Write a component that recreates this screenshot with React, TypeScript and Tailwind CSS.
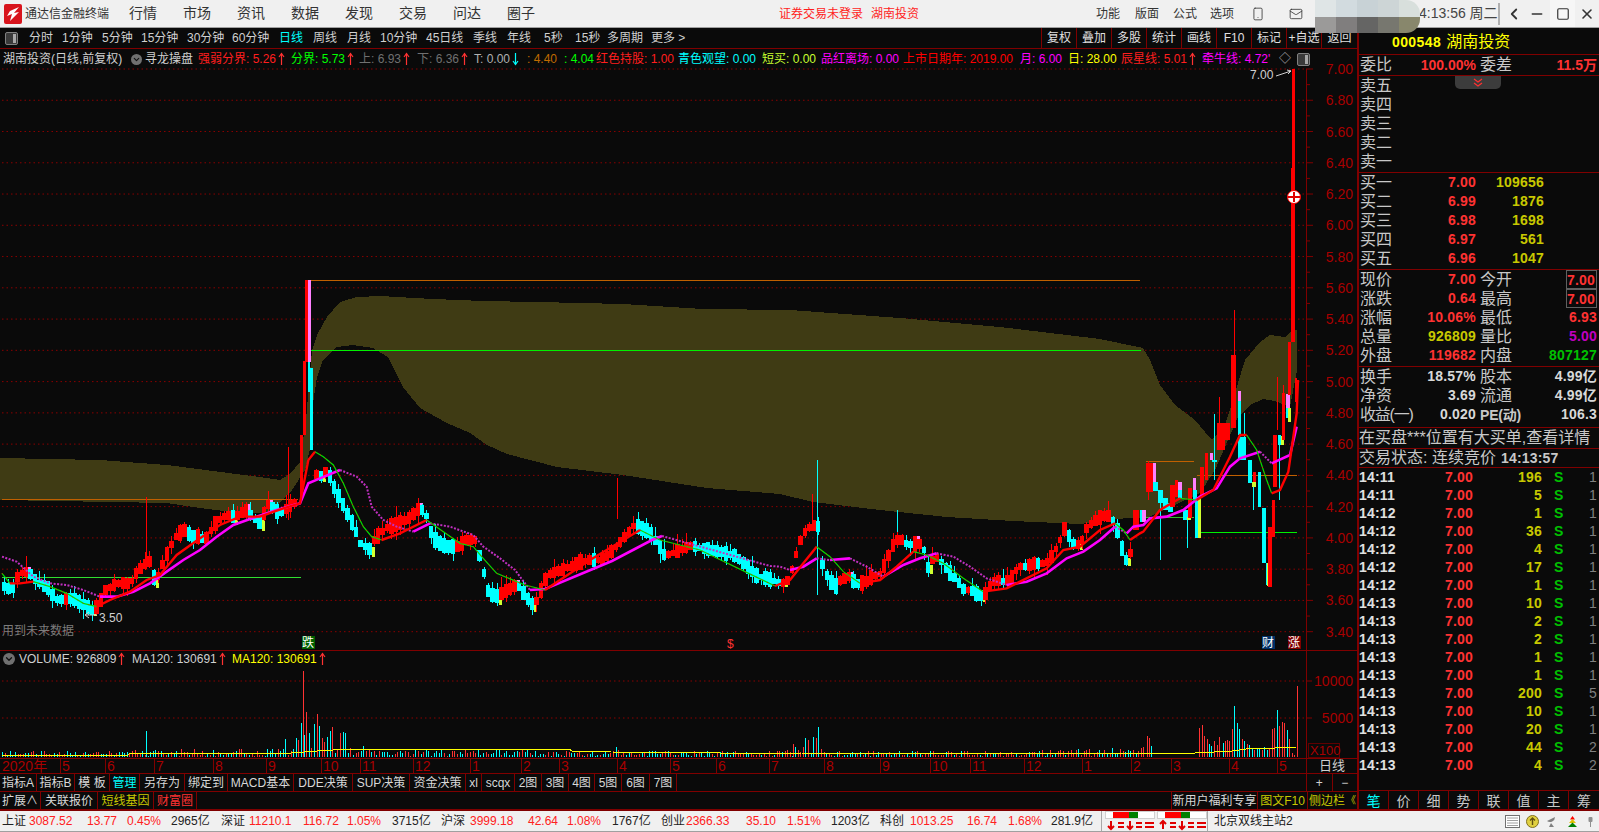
import { ChevronLeft, Minus, Square, X, Smartphone, Mail, ChevronDown } from 'lucide-react';
import type { ReactNode } from 'react';

// ---------- chart data, traced from the picture ----------
type Pt = number[];

const z8 = (list: Pt[]) => list.map(([a, b]) => [a / 3, 440 + b / 3]);
const z9 = (list: Pt[]) => list.map(([a, b]) => [1100 + a / 3, 280 + b / 3]);
const z10 = (list: Pt[]) => list.map(([a, b]) => [290 + a / 3, 270 + b / 3]);
const z11 = (list: Pt[]) => list.map(([a, b]) => [780 + a / 3, 430 + b / 3]);

const pricePath: Pt[] = [
  ...z8([[6,440],[30,450],[50,400],[80,395],[110,430],[140,445],[160,480],[210,475],[240,490],[270,510],[290,495],[310,450],[345,430],[385,430],[405,395],[440,360],[460,430],[490,350],[520,290],[545,270],[570,290],[590,290],[610,300],[640,250],[670,225],[700,230],[730,210],[770,250],[800,190],[830,220],[860,200],[890,180]]),
  ...z10([[75,610],[90,620],[105,600],[125,650],[150,700],[165,730],[190,780],[205,820],[235,840]]),
  ...z8([[1090,345],[1110,305],[1150,265],[1190,250],[1220,235],[1250,205],[1270,215],[1290,290],[1310,310],[1340,320],[1370,320],[1390,300],[1420,300],[1440,380],[1460,460],[1480,470]]),
  [515,585],[532,607],[545,575],[560,570],[581,561],[602,559],[620,540],[632,525],[648,532],[663,556],[688,546],[714,551],[734,556],[755,576],
  ...z11([[0,460],[20,450],[40,380],[60,315],[90,285],[110,290],[120,400],[140,450],[160,470],[175,450],[200,440],[220,460],[245,460],[270,440],[295,430],[310,400],[330,350],[350,325],[380,345],[410,340],[425,360],[440,420],[455,380],[470,385],[495,420],[520,445],[545,480],[565,480],[580,490],[605,500],[620,470],[640,450],[670,455],[690,440],[710,410],[730,410],[755,400],[790,400],[815,370],[830,340],[850,290],[865,330],[880,350],[900,330],[915,290],[935,275],[950,265],[975,255],[990,265],[1005,300],[1025,380],[1040,400],[1050,340],[1065,260]]),
];

const redLine: Pt[] = [
  ...z8([[6,400],[30,430],[60,430],[100,425],[150,440],[200,460],[250,490],[290,500],[330,480],[390,455],[440,420],[480,405],[530,345],[600,295],[660,255],[720,230],[780,230],[850,205],[900,190],[925,60],[945,35],[970,50],[1000,75],[1030,130],[1060,200],[1090,260],[1115,290],[1145,300],[1200,280],[1280,240],[1330,275],[1380,310],[1420,320],[1445,350],[1490,400]]),
  [525,585],[545,590],[590,560],[640,530],[660,540],[700,550],[775,586],
  ...z11([[30,450],[70,400],[110,350],[150,380],[190,425],[240,460],[300,450],[350,410],[400,365],[440,375],[490,400],[550,445],[610,485],[680,475],[720,455],[800,415],[850,360],[900,350],[960,300],[1005,280],[1030,300],[1050,330],[1080,310]]),
  ...z9([[130,755],[180,690],[240,655],[290,660],[340,630],[390,530],[420,465],[440,465],[470,510],[500,600],[515,640],[540,630],[565,575],[590,400],[594,300]]),
];

const magentaLine: Pt[] = [
  ...z8([[6,350],[50,365],[100,410],[150,430],[200,435],[250,450],[300,470],[350,470],[400,455],[450,430],[500,395],[550,360],[600,330],[650,290],[700,255],[770,230],[830,210],[900,190],[925,130],[960,115],[1020,90],[1070,110],[1100,140],[1115,200],[1150,240],[1190,260],[1240,275],[1290,250],[1350,260],[1420,285],[1450,320],[1500,355]]),
  [515,570],[530,590],[545,589],[612,561],[652,540],[662,536],[734,556],[770,566],
  ...z11([[0,410],[30,420],[70,410],[110,385],[150,390],[210,385],[260,410],[310,440],[370,405],[420,385],[470,370],[520,380],[570,410],[620,445],[680,465],[740,455],[800,430],[860,385],[910,365],[960,330],[1005,290],[1040,310],[1090,285]]),
  ...z9([[100,740],[150,715],[200,710],[250,690],[300,650],[350,625],[390,560],[420,535],[480,515],[515,550],[570,525],[590,440]]),
];

const cloud =
  '0,458 100,460 167,465 267,478 280,480 290,474 300,462 306,420 312,350 318,333 327,317 340,302 357,297 380,296 433,299 483,301 537,302 623,304 703,309 790,310 900,318 1000,327 1100,339 1143,348 1150,360 1160,385 1175,405 1195,420 1205,432 1212,440 1225,425 1233,400 1238,383 1245,360 1260,342 1270,335 1285,337 1292,330 1297,330 1297,370 1290,407 1275,401 1263,399 1250,405 1238,417 1228,440 1215,470 1200,493 1147,518 1127,518 1080,524 1013,521 947,517 880,510 813,502 780,494 707,488 623,475 557,467 507,454 487,445 470,433 447,423 420,408 403,387 388,357 373,348 353,345 337,347 323,360 317,377 313,403 312,440 305,470 292,490 270,513 240,513 200,508 167,503 0,500';

const PRICE = ['7.00','6.80','6.60','6.40','6.20','6.00','5.80','5.60','5.40','5.20','5.00','4.80','4.60','4.40','4.20','4.00','3.80','3.60','3.40'];
const priceY = (i: number) => 69 + i * 31.26;

const UP = '#ff0000';
const DOWN = '#00ffff';
const PINK = '#ff80ff';
const LIME = '#d0ff30';

let seed = 20210518;
const rnd = () => {
  seed = (seed * 1664525 + 1013904223) % 4294967296;
  return seed / 4294967296;
};

const at = (list: Pt[], x: number) => {
  for (let i = 1; i < list.length; i++) {
    if (x <= list[i][0]) {
      const [a, b] = list[i - 1];
      const [c, d] = list[i];
      return b + ((d - b) * (x - a)) / Math.max(c - a, 0.1);
    }
  }
  return list[list.length - 1][1];
};

type Box = { x: number; y: number; w: number; h: number; c: string };
const boxes: Box[] = [];
type Vol = { x: number; h: number; c: string };
const vols: Vol[] = [];

const ampPts: Pt[] = [[0,5],[140,6],[280,8],[296,45],[320,42],[345,24],[370,7],[612,6],[617,14],[622,6],[700,5],[785,6],[800,12],[812,26],[825,6],[1000,5],[1100,8],[1146,10]];

const STEP = 4.4;
for (let x = 2; x < 1130; x += STEP) {
  const inSpike = x > 296 && x < 313;
  if (inSpike) continue;
  const y = at(pricePath, x);
  const prev = at(pricePath, x - STEP);
  const next = at(pricePath, x + STEP);
  const up = y - prev < (rnd() - 0.5) * 2;
  const half = 3 + rnd() * 5;
  const c = up ? UP : DOWN;
  const top = y - half;
  const wickTop = top - rnd() * rnd() * 12;
  const wickBottom = y + half + rnd() * rnd() * 10;
  boxes.push({ x: x + 2, y: wickTop, w: 1, h: wickBottom - wickTop, c });
  boxes.push({ x, y: top, w: STEP, h: half * 2, c });
  const peak = y < prev - 0.3 && y <= next;
  const dip = y > prev + 0.3 && y >= next;
  if (peak && rnd() > 0.3) boxes.push({ x: x + STEP, y: top, w: 3, h: half * 1.5, c: PINK });
  if (dip && rnd() > 0.3) boxes.push({ x: x + STEP, y: y - 2, w: 3, h: half * 1.6, c: LIME });
}

for (let x = 2; x < 1146; x += 2.6) {
  const up = rnd() > 0.5;
  vols.push({ x: Math.round(x), h: 1 + rnd() * at(ampPts, x), c: up ? '#ff3232' : DOWN });
}

// the last stretch and the big bars are drawn candle by candle
const hand: [number, number, number, number, string][] = [
  [100,118,690,750,UP],[120,132,690,725,DOWN],[126,138,690,725,PINK],[138,158,550,635,UP],[158,168,550,605,PINK],[160,175,605,632,DOWN],[175,190,630,670,DOWN],[190,205,655,690,DOWN],[205,220,670,695,DOWN],[210,225,615,680,UP],[225,235,600,650,UP],[235,245,605,630,PINK],[235,247,630,655,DOWN],[250,262,690,720,DOWN],[262,274,710,720,LIME],[265,275,625,715,UP],[278,288,595,630,PINK],[278,290,630,660,DOWN],[285,296,650,775,DOWN],[295,303,650,775,LIME],[300,312,560,650,UP],[315,325,520,600,UP],[330,340,520,540,PINK],[335,352,540,545,DOWN],[352,375,430,510,UP],[375,390,430,480,UP],[393,408,225,445,UP],[413,423,333,363,PINK],[413,423,363,465,DOWN],[415,438,470,540,DOWN],[445,455,540,610,DOWN],[455,467,605,620,LIME],[460,468,575,605,UP],[473,483,575,680,DOWN],[487,497,685,850,DOWN],[498,505,850,915,DOWN],[502,512,850,918,LIME],[505,515,740,920,UP],[515,525,660,770,UP],[520,530,465,620,UP],[533,543,465,495,DOWN],[543,551,468,495,LIME],[545,555,340,480,UP],[558,570,342,385,PINK],[558,566,385,415,DOWN],[564,572,385,425,LIME],[563,573,185,345,UP],[586,592,295,365,UP],
];
for (const [a, b, c, d, col] of hand) {
  boxes.push({ x: 1100 + a / 3, y: 280 + c / 3, w: (b - a) / 3, h: (d - c) / 3, c: col });
}

const wicks: [number, number, number, string][] = [
  [146,497,560,UP],[288,447,520,UP],[617,478,519,UP],[817,460,595,DOWN],[812,494,525,UP],[897,510,545,DOWN],
  [1100+145/3,461,500,UP],[1100+180/3,500,560,DOWN],[1100+260/3,510,548,DOWN],[1100+343/3,414,480,DOWN],[1100+358/3,397,440,UP],[1100+403/3,310,380,UP],[1100+432/3,413,455,DOWN],[1100+458/3,480,510,DOWN],[1100+538/3,440,500,DOWN],[1100+532/3,377,430,UP],[1100+548/3,385,410,UP],
];

// spike of the first rally
boxes.push({ x: 300, y: 435, w: 3, h: 62, c: UP });
boxes.push({ x: 303, y: 361, w: 3, h: 74, c: UP });
boxes.push({ x: 305, y: 280, w: 3, h: 82, c: UP });
boxes.push({ x: 308, y: 280, w: 3, h: 82, c: PINK });
boxes.push({ x: 308, y: 362, w: 2, h: 30, c: DOWN });
boxes.push({ x: 310, y: 368, w: 3, h: 82, c: DOWN });
// limit-up run on the right
boxes.push({ x: 1292, y: 69, w: 3, h: 100, c: UP });
boxes.push({ x: 1291, y: 168, w: 4, h: 174, c: UP });

const handVol: [number, number][] = [[50,350],[58,355],[63,378],[207,325],[215,315],[223,350],[230,358],[238,372],[244,378],[253,365],[260,375],[268,352],[278,370],[284,365],[292,360],[298,365],[307,328],[313,258],[322,310],[328,328],[337,358],[343,365],[352,372],[358,375],[366,385],[373,392],[381,388],[388,385],[396,392],[403,382],[411,392],[418,385],[427,328],[433,325],[442,270],[448,318],[457,306],[463,310],[472,330],[478,358],[487,400],[493,405],[502,200]];
const handCyan = [63,238,244,278,313,322,328,343,358,366,381,388,403,411,442,472];
for (const [a, top] of handVol) {
  vols.push({ x: Math.round(1130 + a / 3), h: (412 - top) / 3, c: handCyan.includes(a) ? DOWN : '#ff3232' });
}
vols.push({ x: 303, h: 86, c: '#ff3232' }, { x: 146, h: 26, c: DOWN }, { x: 818, h: 30, c: DOWN }, { x: 793, h: 13, c: '#ff3232' });

const volMa = '2,755 128,755 130,753 291,753 317,751 349,749 569,749 572,751 611,752 720,753 757,754 802,753 1195,753 1214,752 1232,751 1246,749 1275,748 1296,747';

const runs = (list: Pt[]) => {
  const sorted = [...list].sort((a, b) => a[0] - b[0]);
  const out: { rising: boolean; pts: string }[] = [];
  let cur: Pt[] = [sorted[0]];
  let rising = sorted[1][1] <= sorted[0][1];
  for (let i = 1; i < sorted.length; i++) {
    const r = sorted[i][1] <= sorted[i - 1][1];
    if (r !== rising) {
      out.push({ rising, pts: cur.map((p) => p.join(',')).join(' ') });
      cur = [sorted[i - 1]];
      rising = r;
    }
    cur.push(sorted[i]);
  }
  out.push({ rising, pts: cur.map((p) => p.join(',')).join(' ') });
  return out;
};

// ---------- small bits ----------
function UpArrow({ color = '#ff3232' }: { color?: string }) {
  return (
    <svg width="7" height="14" viewBox="0 0 7 14" className="inline-block shrink-0 ml-[2px]">
      <path d="M3.5 1 L3.5 13 M1 5 L3.5 1.5 L6 5" stroke={color} strokeWidth="1.2" fill="none" />
    </svg>
  );
}

function DownArrow({ color = '#00ffff' }: { color?: string }) {
  return (
    <svg width="7" height="14" viewBox="0 0 7 14" className="inline-block shrink-0 ml-[2px]">
      <path d="M3.5 1 L3.5 13 M1 9 L3.5 12.5 L6 9" stroke={color} strokeWidth="1.2" fill="none" />
    </svg>
  );
}

function Logo() {
  return (
    <svg width="18" height="20" viewBox="0 0 18 20" className="shrink-0">
      <rect width="18" height="20" rx="2" fill="#d8141c" />
      <path d="M15 3 L6 7 L3 12 L8 10 L6 17 L15 8 L10 9 Z" fill="#ffffff" />
    </svg>
  );
}

function SideToggle() {
  return (
    <svg width="13" height="13" viewBox="0 0 13 13">
      <rect x="0.5" y="0.5" width="12" height="12" rx="1.5" fill="#3a3a3a" stroke="#808080" />
      <rect x="8" y="2" width="3" height="9" fill="#a8a8a8" />
    </svg>
  );
}

function Pulse({ flip }: { flip: boolean }) {
  return (
    <svg width="50" height="20" viewBox="0 0 50 20" className="shrink-0">
      <rect x="0.5" y="0.5" width="49" height="7" fill="#ffffff" stroke="#d0d0d0" />
      <rect x="8" y="1" width="16" height="6" fill="#ff0000" />
      <rect x="24" y="1" width="9" height="6" fill="#008000" />
      <path d={flip ? 'M6 10 L6 18 M3 13 L6 10 L9 13' : 'M6 18 L6 10 M3 15 L6 18 L9 15'} stroke="#e00000" strokeWidth="2" fill="none" />
      <path d="M13 12 H19 M13 16 H19 M31 12 H37 M31 16 H37 M40 12 H49 M40 16 H49" stroke="#e00000" strokeWidth="2" />
      <path d="M25 10 L25 18 M22 15 L25 18 L28 15" stroke="#e00000" strokeWidth="2" fill="none" />
    </svg>
  );
}

// ---------- panels ----------
const menus = ['行情', '市场', '资讯', '数据', '发现', '交易', '问达', '圈子'];

function TitleBar() {
  return (
    <div className="h-[28px] shrink-0 flex items-center bg-[#f0f0f0] border-b border-[#a0a0a0] text-[#333] relative">
      <div className="ml-[4px] flex items-center w-[125px]">
        <Logo />
        <span className="ml-[3px] text-[12px]">通达信金融终端</span>
      </div>
      {menus.map((m) => (
        <span key={m} className="w-[54px] text-[14px]">{m}</span>
      ))}
      <span className="ml-[218px] text-[12px] text-[#ff1e1e] w-[92px]">证券交易未登录</span>
      <span className="text-[12px] text-[#ff1e1e] w-[225px]">湖南投资</span>
      <span className="text-[12px] w-[39px]">功能</span>
      <span className="text-[12px] w-[38px]">版面</span>
      <span className="text-[12px] w-[37px]">公式</span>
      <span className="text-[12px] w-[41px]">选项</span>
      <Smartphone size={14} strokeWidth={1.4} className="w-[14px]" />
      <Mail size={14} strokeWidth={1.4} className="ml-[24px]" />
      <span className="ml-[116px] text-[14px] w-[79px] text-[#444] whitespace-nowrap">4:13:56 周二</span>
      <div className="h-[22px] w-[2px] bg-[#b0b0b0]" />
      <ChevronLeft size={18} strokeWidth={2.4} className="ml-[5px]" />
      <Minus size={16} strokeWidth={2.4} className="ml-[6px]" />
      <div className="ml-[5px] w-[25px] h-full flex items-center justify-center bg-[#f6f6f6]">
        <Square size={14} strokeWidth={2} />
      </div>
      <X size={16} strokeWidth={2.4} className="ml-[4px]" />
      {/* mosaic that hides the account name */}
      <div className="absolute left-[1315px] top-0 w-[105px] h-[33px] rounded-r-[14px] overflow-hidden z-10 grid grid-cols-5 grid-rows-2">
        <div className="bg-[#dfe5e6]" />
        <div className="bg-[#d2dbdf]" />
        <div className="bg-[#c8d2d6]" />
        <div className="bg-[#cdd5d6]" />
        <div className="bg-[#d8dfdc]" />
        <div className="bg-[#9b9a99]" />
        <div className="bg-[#807e7e]" />
        <div className="bg-[#656564]" />
        <div className="bg-[#77776f]" />
        <div className="bg-[#88876c]" />
      </div>
    </div>
  );
}

const periods: [string, string, string][] = [
  ['分时', 'w-[33px]', 'text-[#d0d0d0]'], ['1分钟', 'w-[40px]', 'text-[#d0d0d0]'], ['5分钟', 'w-[39px]', 'text-[#d0d0d0]'],
  ['15分钟', 'w-[46px]', 'text-[#d0d0d0]'], ['30分钟', 'w-[45px]', 'text-[#d0d0d0]'], ['60分钟', 'w-[47px]', 'text-[#d0d0d0]'],
  ['日线', 'w-[34px]', 'text-[#00ffff]'], ['周线', 'w-[34px]', 'text-[#d0d0d0]'], ['月线', 'w-[33px]', 'text-[#d0d0d0]'],
  ['10分钟', 'w-[46px]', 'text-[#d0d0d0]'], ['45日线', 'w-[47px]', 'text-[#d0d0d0]'], ['季线', 'w-[34px]', 'text-[#d0d0d0]'],
  ['年线', 'w-[37px]', 'text-[#d0d0d0]'], ['5秒', 'w-[31px]', 'text-[#d0d0d0]'], ['15秒', 'w-[32px]', 'text-[#d0d0d0]'],
  ['多周期', 'w-[44px]', 'text-[#d0d0d0]'], ['更多 >', 'w-[34px]', 'text-[#d0d0d0]'],
];

const tools = ['复权', '叠加', '多股', '统计', '画线', 'F10', '标记', '+自选', '返回'];

function Toolbar() {
  return (
    <div className="h-[20px] shrink-0 flex items-center text-[12px] whitespace-nowrap">
      <div className="w-[29px] pl-[5px] flex items-center"><SideToggle /></div>
      {periods.map(([t, w, c]) => (
        <span key={t} className={`${w} ${c}`}>{t}</span>
      ))}
      <div className="ml-auto flex h-full">
        {tools.map((t) => (
          <span key={t} className="w-[35px] last:w-[36px] flex items-center justify-center border-l border-[#800000] text-[#e0e0e0]">{t}</span>
        ))}
      </div>
    </div>
  );
}

function InfoRow() {
  return (
    <div className="h-[21px] shrink-0 flex items-center border-t border-[#800000] text-[12px] whitespace-nowrap pl-[3px]">
      <span className="w-[128px] text-[#d0d0d0]">湖南投资(日线,前复权)</span>
      <span className="w-[14px] h-[12px] flex items-center"><span className="w-[11px] h-[11px] rounded-full bg-[#707070] flex items-center justify-center"><ChevronDown size={9} color="#111" strokeWidth={3} /></span></span>
      <span className="w-[53px] text-[#d0d0d0]">寻龙操盘</span>
      <span className="w-[93px] flex items-center text-[#ff1e1e]">强弱分界: 5.26<UpArrow /></span>
      <span className="w-[68px] flex items-center text-[#00ff00]">分界: 5.73<UpArrow /></span>
      <span className="w-[58px] flex items-center text-[#707070]">上: 6.93<UpArrow /></span>
      <span className="w-[57px] flex items-center text-[#707070]">下: 6.36<UpArrow /></span>
      <span className="w-[53px] flex items-center text-[#b0b0b0]">T: 0.00<DownArrow /></span>
      <span className="w-[37px] text-[#c06a00]">: 4.40</span>
      <span className="w-[32px] text-[#00ff00]">: 4.04</span>
      <span className="w-[82px] text-[#ff1e1e]">红色持股: 1.00</span>
      <span className="w-[84px] text-[#00ffff]">青色观望: 0.00</span>
      <span className="w-[59px] text-[#c8ff30]">短买: 0.00</span>
      <span className="w-[82px] text-[#ff00ff]">品红离场: 0.00</span>
      <span className="w-[117px] text-[#ff0000]">上市日期年: 2019.00</span>
      <span className="w-[48px] text-[#ff00ff]">月: 6.00</span>
      <span className="w-[53px] text-[#ffff00]">日: 28.00</span>
      <span className="w-[81px] flex items-center text-[#ff1e1e]">辰星线: 5.01<UpArrow /></span>
      <span className="w-[77px] text-[#ff00ff]">牵牛线: 4.72&#39;</span>
      <span className="w-[18px] text-[#b0b0b0]">◇</span>
      <SideToggle />
    </div>
  );
}

function MainChart() {
  return (
    <svg width="1357" height="581" viewBox="0 69 1357 581" className="block shrink-0 overflow-visible">
      {PRICE.map((_, i) => (
        <line key={i} x1="2" x2="1306" y1={priceY(i)} y2={priceY(i)} stroke="#8a0000" strokeDasharray="1.5 3" />
      ))}
      <polygon points={cloud} fill="#3f3b14" shapeRendering="crispEdges" />
      <g shapeRendering="crispEdges">
        <line x1="308" x2="1140" y1="280.5" y2="280.5" stroke="#c06000" />
        <line x1="311" x2="1141" y1="350.5" y2="350.5" stroke="#00f000" />
        <line x1="2" x2="298" y1="499.5" y2="499.5" stroke="#c06000" />
        <line x1="2" x2="301" y1="577.5" y2="577.5" stroke="#30e030" />
        <line x1="1146" x2="1194" y1="461.5" y2="461.5" stroke="#c06000" />
        <line x1="1146" x2="1194" y1="517.5" y2="517.5" stroke="#30c030" />
        <line x1="1197" x2="1297" y1="475.5" y2="475.5" stroke="#c06000" />
        <line x1="1201" x2="1297" y1="532.5" y2="532.5" stroke="#00f000" />
        {wicks.map(([x, a, b, c], i) => (
          <rect key={i} x={x} y={a} width="1" height={b - a} fill={c} />
        ))}
        {boxes.map((b, i) => (
          <rect key={i} x={b.x} y={b.y} width={b.w} height={b.h} fill={b.c} />
        ))}
      </g>
      {runs(magentaLine).map((r, i) =>
        r.rising ? (
          <polyline key={i} points={r.pts} fill="none" stroke="#ff00ff" strokeWidth="2.6" />
        ) : (
          <polyline key={i} points={r.pts} fill="none" stroke="#c030c0" strokeWidth="2" strokeDasharray="2 1.5" />
        ),
      )}
      {runs(redLine).map((r, i) =>
        r.rising ? (
          <polyline key={i} points={r.pts} fill="none" stroke="#ff0000" strokeWidth="2.4" />
        ) : (
          <g key={i}>
            <polyline points={r.pts} fill="none" stroke="#00e000" strokeWidth="1.2" />
            <polyline points={r.pts} fill="none" stroke="#e02000" strokeWidth="1" strokeDasharray="1 5" />
          </g>
        ),
      )}
      <circle cx="1294" cy="197" r="6.5" fill="#ffffff" stroke="#ff0000" strokeWidth="1" />
      <line x1="1288" x2="1300" y1="197" y2="197" stroke="#e00000" strokeWidth="2" />
      <line x1="1294" x2="1294" y1="192" y2="202" stroke="#e00000" strokeWidth="2" />

      <text x="1250" y="79" fontSize="12" fill="#d0d0d0">7.00</text>
      <path d="M1276 76 L1291 71 M1287 70 L1291 71 L1288 74" stroke="#d0d0d0" fill="none" />
      <text x="99" y="622" fontSize="12" fill="#d0d0d0">3.50</text>
      <path d="M97 615 L86 615 M89 612 L85 615 L89 618" stroke="#d0d0d0" fill="none" />
      <text x="2" y="635" fontSize="12" fill="#7c7c7c">用到未来数据</text>

      <rect x="302" y="636" width="13" height="13" fill="#006000" />
      <text x="302" y="647" fontSize="12" fill="#ffffff">跌</text>
      <text x="727" y="648" fontSize="12" fill="#ff3232">$</text>
      <rect x="1262" y="636" width="13" height="13" fill="#003068" />
      <text x="1262" y="647" fontSize="12" fill="#ffffff">财</text>
      <rect x="1288" y="636" width="13" height="13" fill="#800000" />
      <text x="1288" y="647" fontSize="12" fill="#ffffff">涨</text>

      <line x1="1306.5" x2="1306.5" y1="69" y2="650" stroke="#800000" />
      {Array.from({ length: 37 }, (_, i) => (
        <line key={i} x1="1306" x2={i % 2 ? 1310 : 1313} y1={69 + i * 15.63} y2={69 + i * 15.63} stroke="#800000" />
      ))}
      {PRICE.map((p, i) => (
        <text key={p} x="1353" y={priceY(i) + 5} textAnchor="end" fontSize="14" fill="#a80000">{p}</text>
      ))}
    </svg>
  );
}

function VolumeChart() {
  return (
    <div className="relative h-[108px] shrink-0 border-t border-[#800000]">
      <svg width="1357" height="107" viewBox="0 651 1357 107" className="block">
        {[681, 718].map((y) => (
          <line key={y} x1="2" x2="1306" y1={y} y2={y} stroke="#8a0000" strokeDasharray="1.5 3" />
        ))}
        <g shapeRendering="crispEdges">
          {vols.map((v, i) => (
            <rect key={i} x={v.x} y={757 - v.h} width="1" height={v.h} fill={v.c} />
          ))}
        </g>
        <polyline points={volMa} fill="none" stroke="#ffff00" strokeWidth="1" shapeRendering="crispEdges" />
        <line x1="1306.5" x2="1306.5" y1="651" y2="758" stroke="#800000" />
        <line x1="1306" x2="1312" y1="681" y2="681" stroke="#800000" />
        <line x1="1306" x2="1312" y1="718" y2="718" stroke="#800000" />
        <rect x="1308.5" y="743.5" width="31" height="14" fill="none" stroke="#600000" />
        <text x="1310" y="755" fontSize="13" fill="#a80000">X100</text>
        <text x="1353" y="686" textAnchor="end" fontSize="14" fill="#a80000">10000</text>
        <text x="1353" y="723" textAnchor="end" fontSize="14" fill="#a80000">5000</text>
      </svg>
      <div className="absolute left-[3px] top-[-1px] flex items-center text-[12px] whitespace-nowrap">
        <span className="w-[16px] h-[14px] flex items-center"><span className="w-[12px] h-[12px] rounded-full bg-[#707070] flex items-center justify-center"><ChevronDown size={10} color="#111" strokeWidth={3} /></span></span>
        <span className="w-[113px] flex items-center text-[#d0d0d0]">VOLUME: 926809<UpArrow /></span>
        <span className="w-[100px] flex items-center text-[#d0d0d0]">MA120: 130691<UpArrow /></span>
        <span className="flex items-center text-[#ffff00]">MA120: 130691<UpArrow /></span>
      </div>
    </div>
  );
}

const ticks: [string, string][] = [
  ['2020年', 'w-[58px]'], ['5', 'w-[45px]'], ['6', 'w-[49px]'], ['7', 'w-[59px]'], ['8', 'w-[53px]'], ['9', 'w-[55px]'],
  ['10', 'w-[39px]'], ['11', 'w-[53px]'], ['12', 'w-[57px]'], ['1', 'w-[51px]'], ['2', 'w-[38px]'], ['3', 'w-[58px]'],
  ['4', 'w-[53px]'], ['5', 'w-[46px]'], ['6', 'w-[53px]'], ['7', 'w-[55px]'], ['8', 'w-[56px]'], ['9', 'w-[50px]'],
  ['10', 'w-[40px]'], ['11', 'w-[54px]'], ['12', 'w-[58px]'], ['1', 'w-[49px]'], ['2', 'w-[40px]'], ['3', 'w-[58px]'],
  ['4', 'w-[48px]'], ['5', 'w-[29px]'],
];

function DateAxis() {
  return (
    <div className="h-[15px] shrink-0 flex border-t border-[#800000] text-[14px] leading-[14px] text-[#a80000]">
      <div className="w-[1306px] flex pl-[2px]">
        {ticks.map(([t, w], i) => (
          <span key={i} className={`${w} border-l border-[#800000] pl-[1px] first:border-l-0 first:pl-0 whitespace-nowrap`}>{t}</span>
        ))}
      </div>
      <span className="flex-1 border-l border-[#800000] text-center text-[#d0d0d0] text-[13px]">日线</span>
    </div>
  );
}

const buttons: [string, string, string][] = [
  ['指标A', 'w-[37px]', 'text-[#d8d8d8]'], ['指标B', 'w-[38px]', 'text-[#d8d8d8]'], ['模 板', 'w-[35px]', 'text-[#d8d8d8]'],
  ['管理', 'w-[30px]', 'text-[#00ffff]'], ['另存为', 'w-[45px]', 'text-[#d8d8d8]'], ['绑定到', 'w-[43px]', 'text-[#d8d8d8]'],
  ['MACD基本', 'w-[66px]', 'text-[#d8d8d8]'], ['DDE决策', 'w-[59px]', 'text-[#d8d8d8]'], ['SUP决策', 'w-[57px]', 'text-[#d8d8d8]'],
  ['资金决策', 'w-[56px]', 'text-[#d8d8d8]'], ['xl', 'w-[16px]', 'text-[#d8d8d8]'], ['scqx', 'w-[33px]', 'text-[#d8d8d8]'],
  ['2图', 'w-[27px]', 'text-[#d8d8d8]'], ['3图', 'w-[27px]', 'text-[#d8d8d8]'], ['4图', 'w-[26px]', 'text-[#d8d8d8]'],
  ['5图', 'w-[27px]', 'text-[#d8d8d8]'], ['6图', 'w-[28px]', 'text-[#d8d8d8]'], ['7图', 'w-[27px]', 'text-[#d8d8d8]'],
];

const extras: [string, string, string][] = [
  ['扩展∧', 'w-[41px]', 'text-[#d8d8d8]'], ['关联报价', 'w-[57px]', 'text-[#d8d8d8]'],
  ['短线基因', 'w-[56px]', 'text-[#c8c800]'], ['财富圈', 'w-[43px]', 'text-[#ff3232]'],
];

function ButtonRows() {
  return (
    <>
      <div className="h-[18px] shrink-0 flex border-t border-[#800000] text-[12px] whitespace-nowrap">
        {buttons.map(([t, w, c]) => (
          <span key={t} className={`${w} ${c} flex items-center justify-center border-r border-[#800000]`}>{t}</span>
        ))}
        <div className="ml-auto w-[51px] flex border-l border-[#800000] text-[#d0d0d0]">
          <span className="flex-1 text-center border-r border-[#800000]">+</span>
          <span className="flex-1 text-center">−</span>
        </div>
      </div>
      <div className="h-[18px] shrink-0 flex border-t border-[#800000] text-[12px] whitespace-nowrap">
        {extras.map(([t, w, c]) => (
          <span key={t} className={`${w} ${c} flex items-center justify-center border-r border-[#800000]`}>{t}</span>
        ))}
        <div className="ml-auto flex">
          <span className="w-[86px] flex items-center justify-center border-l border-[#800000] text-[#d8d8d8]">新用户福利专享</span>
          <span className="w-[50px] flex items-center justify-center border-l border-[#800000] text-[#c8c800]">图文F10</span>
          <span className="w-[50px] flex items-center justify-start pl-[1px] border-l border-[#800000] text-[#c8c800] overflow-hidden">侧边栏<span className="ml-[1px] text-[10px]">《</span></span>
        </div>
      </div>
    </>
  );
}

// ---------- quote panel ----------
const sells = ['卖五', '卖四', '卖三', '卖二', '卖一'];
const buys: [string, string, string][] = [
  ['买一', '7.00', '109656'], ['买二', '6.99', '1876'], ['买三', '6.98', '1698'], ['买四', '6.97', '561'], ['买五', '6.96', '1047'],
];

function Row2({ a, b, c, d, bc = 'text-[#ff3232]', dc = 'text-[#ff3232]', boxed = false }: { a: ReactNode; b: string; c: ReactNode; d: string; bc?: string; dc?: string; boxed?: boolean }) {
  return (
    <div className="h-[19px] flex items-center pl-[1px] text-[#c8c8c8]">
      <span className="w-[64px] text-[16px] leading-[19px] whitespace-nowrap">{a}</span>
      <span className={`w-[52px] text-right text-[14px] font-bold tracking-[0.2px] whitespace-nowrap ${bc}`}>{b}</span>
      <span className="ml-[4px] w-[46px] text-[16px] leading-[19px] whitespace-nowrap">{c}</span>
      <span className={`ml-auto mr-[2px] h-[19px] leading-[18px] text-right text-[14px] font-bold tracking-[0.2px] whitespace-nowrap ${dc} ${boxed ? 'w-[31px] border border-[#606060] pr-[1px]' : ''}`}>{d}</span>
    </div>
  );
}

const prints: [string, string, string][] = [
  ['14:11','196','1'],['14:11','5','1'],['14:12','1','1'],['14:12','36','1'],['14:12','4','1'],['14:12','17','1'],['14:12','1','1'],
  ['14:13','10','1'],['14:13','2','1'],['14:13','2','1'],['14:13','1','1'],['14:13','1','1'],['14:13','200','5'],['14:13','10','1'],
  ['14:13','20','1'],['14:13','44','2'],['14:13','4','2'],
];

const tabs = ['笔', '价', '细', '势', '联', '值', '主', '筹'];

function QuotePanel() {
  return (
    <div className="w-[242px] shrink-0 flex flex-col border-l-2 border-[#800000] text-[#c8c8c8] relative">
      <div className="h-[26px] shrink-0 flex items-center pl-[33px] pt-[2px] text-[#ffff00] whitespace-nowrap">
        <span className="text-[14px] font-bold tracking-[0.4px]">000548</span>
        <span className="ml-[5px] text-[16px]">湖南投资</span>
      </div>
      <div className="h-[21px] shrink-0 flex items-center pl-[1px] border-t border-[#800000]">
        <span className="w-[58px] text-[16px]">委比</span>
        <span className="w-[58px] text-right text-[14px] font-bold text-[#ff3232]">100.00%</span>
        <span className="ml-[4px] text-[16px]">委差</span>
        <span className="ml-auto mr-[2px] text-[14px] font-bold text-[#ff3232] whitespace-nowrap">11.5万</span>
      </div>
      <div className="h-[97px] shrink-0 pl-[1px] border-t border-[#800000] relative">
        {sells.map((s) => (
          <div key={s} className="h-[19px] text-[16px] leading-[19px]">{s}</div>
        ))}
        <div className="absolute left-[96px] top-0 w-[46px] h-[13px] rounded-b-[5px] bg-[#3c3c3c] flex items-center justify-center">
          <svg width="10" height="9" viewBox="0 0 10 9">
            <path d="M1 1 L5 4 L9 1 M1 5 L5 8 L9 5" stroke="#ff3232" strokeWidth="1.2" fill="none" />
          </svg>
        </div>
      </div>
      <div className="h-[97px] shrink-0 pl-[1px] border-t border-[#800000]">
        {buys.map(([l, p, v]) => (
          <div key={l} className="h-[19px] flex items-center">
            <span className="w-[64px] text-[16px] leading-[19px]">{l}</span>
            <span className="w-[52px] text-right text-[14px] font-bold tracking-[0.2px] text-[#ff3232]">{p}</span>
            <span className="w-[68px] text-right text-[14px] font-bold tracking-[0.2px] text-[#c8c800]">{v}</span>
          </div>
        ))}
      </div>
      <div className="h-[97px] shrink-0 border-t border-[#800000]">
        <Row2 a="现价" b="7.00" c="今开" d="7.00" boxed />
        <Row2 a="涨跌" b="0.64" c="最高" d="7.00" boxed />
        <Row2 a="涨幅" b="10.06%" c="最低" d="6.93" />
        <Row2 a="总量" b="926809" c="量比" d="5.00" bc="text-[#c8c800]" dc="text-[#c000c0]" />
        <Row2 a="外盘" b="119682" c="内盘" d="807127" dc="text-[#00c000]" />
      </div>
      <div className="h-[61px] shrink-0 border-t border-[#800000]">
        <Row2 a="换手" b="18.57%" c="股本" d="4.99亿" bc="text-[#d8d8d8]" dc="text-[#d8d8d8]" />
        <Row2 a="净资" b="3.69" c="流通" d="4.99亿" bc="text-[#d8d8d8]" dc="text-[#d8d8d8]" />
        <Row2
          a={<span className="tracking-[-1.2px]">收益(一)</span>}
          b="0.020"
          c={<span className="text-[14px] font-bold tracking-[-0.2px]">PE(动)</span>}
          d="106.3"
          bc="text-[#d8d8d8]"
          dc="text-[#d8d8d8]"
        />
      </div>
      <div className="h-[21px] shrink-0 flex items-center border-t border-[#800000] text-[16px] whitespace-nowrap">在买盘***位置有大买单,查看详情</div>
      <div className="h-[19px] shrink-0 flex items-center border-t border-[#800000] text-[16px] whitespace-nowrap">
        交易状态: 连续竞价<span className="ml-[5px] text-[14px] font-bold tracking-[0.2px]">14:13:57</span>
      </div>
      <div className="flex-1 border-t border-[#800000]">
        {prints.map(([t, v, n], i) => (
          <div key={i} className="h-[18px] flex items-center text-[14px] font-bold tracking-[0.2px]">
            <span className="w-[62px] text-[#e0e0e0]">{t}</span>
            <span className="w-[52px] text-right text-[#ff3232]">7.00</span>
            <span className="w-[69px] text-right text-[#c8c800]">{v}</span>
            <span className="ml-[12px] w-[10px] text-[#00c000]">S</span>
            <span className="ml-auto mr-[2px] font-normal text-[#808080]">{n}</span>
          </div>
        ))}
      </div>
      <div className="h-[19px] shrink-0 grid grid-cols-8 border-t border-[#800000]">
        {tabs.map((t, i) => (
          <span key={t} className={`flex items-center justify-center text-[14px] border-r border-[#800000] last:border-r-0 ${i === 0 ? 'text-[#00ffff]' : 'text-[#c8c8c8]'}`}>{t}</span>
        ))}
      </div>
    </div>
  );
}

const index: [string, string, string][] = [
  ['上证','w-[27px]','text-[#222]'],['3087.52','w-[58px]','text-[#ff2020]'],['13.77','w-[40px]','text-[#ff2020]'],['0.45%','w-[44px]','text-[#ff2020]'],['2965亿','w-[50px]','text-[#222]'],
  ['深证','w-[28px]','text-[#222]'],['11210.1','w-[54px]','text-[#ff2020]'],['116.72','w-[44px]','text-[#ff2020]'],['1.05%','w-[45px]','text-[#ff2020]'],['3715亿','w-[49px]','text-[#222]'],
  ['沪深','w-[29px]','text-[#222]'],['3999.18','w-[58px]','text-[#ff2020]'],['42.64','w-[39px]','text-[#ff2020]'],['1.08%','w-[45px]','text-[#ff2020]'],['1767亿','w-[49px]','text-[#222]'],
  ['创业','w-[25px]','text-[#222]'],['2366.33','w-[60px]','text-[#ff2020]'],['35.10','w-[41px]','text-[#ff2020]'],['1.51%','w-[44px]','text-[#ff2020]'],['1203亿','w-[49px]','text-[#222]'],
  ['科创','w-[30px]','text-[#222]'],['1013.25','w-[57px]','text-[#ff2020]'],['16.74','w-[41px]','text-[#ff2020]'],['1.68%','w-[43px]','text-[#ff2020]'],['281.9亿','w-[50px]','text-[#222]'],
];

function StatusBar() {
  return (
    <div className="flex-1 flex items-center bg-[#f0f0f0] border-t-2 border-[#800000] border-b border-b-[#a0a0a0] text-[12px] whitespace-nowrap relative">
      <div className="w-[1101px] pl-[2px] flex">
        {index.map(([t, w, c], i) => (
          <span key={i} className={`${w} ${c}`}>{t}</span>
        ))}
      </div>
      <div className="h-full w-[107px] flex items-center gap-[2px] pl-[3px] border-l border-r border-[#a8a8a8]">
        <Pulse flip={false} />
        <Pulse flip />
      </div>
      <span className="ml-[6px] text-[12px] text-[#222]">北京双线主站2</span>
      <div className="ml-auto mr-[5px] flex items-center gap-[6px]">
        <svg width="15" height="13" viewBox="0 0 15 13"><rect x="0.5" y="0.5" width="14" height="12" fill="#fff" stroke="#707070" /><path d="M2 3H13M2 5.5H13M2 8H13M2 10.5H13" stroke="#a0a0a0" /></svg>
        <svg width="13" height="13" viewBox="0 0 13 13"><circle cx="6.5" cy="6.5" r="6" fill="#e0d040" stroke="#807020" /><path d="M6.5 3V10M4 5.5L6.5 3L9 5.5" stroke="#605010" strokeWidth="1.4" fill="none" /></svg>
        <svg width="13" height="13" viewBox="0 0 13 13"><path d="M2 6 A5 5 0 0 0 10 2 Z" fill="#808080" /><path d="M6 8 L4 12 H9 Z" fill="#808080" /></svg>
        <svg width="9" height="11" viewBox="0 0 9 11" className="ml-[4px]"><path d="M4.5 0 L7 3.5 H2 Z" fill="#ff0000" /><path d="M4.5 3 L8 7 H1 Z" fill="#e0c000" /><path d="M4.5 6.5 L9 11 H0 Z" fill="#008000" /></svg>
        <svg width="7" height="11" viewBox="0 0 7 11" className="ml-[4px]"><rect x="1.5" y="1" width="4" height="5" rx="1" fill="#909090" /><rect x="3" y="6" width="1" height="5" fill="#909090" /></svg>
      </div>
    </div>
  );
}

export default function App() {
  return (
    <div className="w-[1599px] h-[832px] flex flex-col overflow-hidden bg-[#0a0a0a] [font-family:'Liberation_Sans','Noto_Sans_CJK_SC',sans-serif]">
      <TitleBar />
      <div className="h-[781px] shrink-0 flex">
        <div className="w-[1357px] shrink-0 flex flex-col">
          <Toolbar />
          <InfoRow />
          <MainChart />
          <VolumeChart />
          <DateAxis />
          <ButtonRows />
        </div>
        <QuotePanel />
      </div>
      <StatusBar />
    </div>
  );
}
